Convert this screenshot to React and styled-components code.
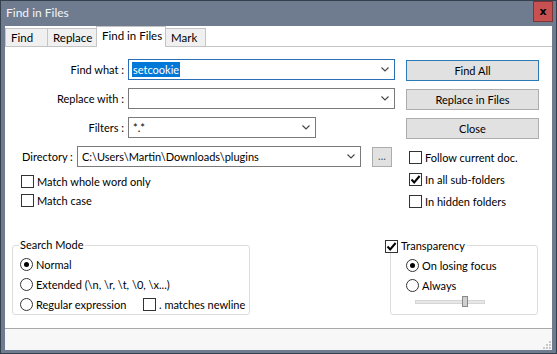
import React from 'react';
import styled, { createGlobalStyle } from 'styled-components';

const Global = createGlobalStyle`
  html, body { margin: 0; padding: 0; background: #6f7c8f; }
  body {
    font-family: Lato, "Liberation Sans", sans-serif;
    font-size: 11px;
    color: #000;
  }
  * { box-sizing: border-box; }
`;

const Window = styled.div`
  width: 557px;
  height: 354px;
  display: flex;
  flex-direction: column;
  background: #6f7c8f;
  border: 1px solid #34404e;
  overflow: hidden;
`;

const TitleBar = styled.div`
  height: 25px;
  flex: none;
  display: flex;
  align-items: flex-start;
  justify-content: space-between;
  padding: 0 3px 0 5px;
`;

const Title = styled.div`
  color: #f2f4f7;
  font-size: 12px;
  line-height: 24px;
`;

const CloseButton = styled.div`
  width: 20px;
  height: 21px;
  background: #c75050;
  border: 1px solid #7d3434;
  display: flex;
  align-items: center;
  justify-content: center;
  color: #000;
  font-weight: bold;
  font-size: 11px;
  font-family: "DejaVu Sans", sans-serif;
  line-height: 1;
`;

const Client = styled.div`
  flex: 1;
  margin: 0 4px 3px 4px;
  background: #fff;
  display: flex;
  flex-direction: column;
`;

const TabStrip = styled.div`
  height: 21px;
  flex: none;
  display: flex;
  align-items: flex-end;
  border-bottom: 1px solid #c4c4c4;
`;

const Tab = styled.div`
  width: ${p => p.$w}px;
  height: ${p => (p.$active ? 21 : 18)}px;
  margin-left: ${p => (p.$first ? 0 : -1)}px;
  margin-bottom: ${p => (p.$active ? -1 : 0)}px;
  padding: 0 0 ${p => (p.$active ? 3 : 0)}px 5px;
  background: ${p => (p.$active ? '#fff' : '#f0f0f0')};
  border: 1px solid #c4c4c4;
  border-bottom: ${p => (p.$active ? 'none' : '0')};
  position: relative;
  z-index: ${p => (p.$active ? 1 : 0)};
  display: flex;
  align-items: center;
  white-space: nowrap;
  font-size: 11.5px;
`;

const Page = styled.div`
  flex: 1;
  display: flex;
  flex-direction: column;
  background: #fff;
`;

const TopSection = styled.div`
  display: grid;
  grid-template-columns: 401px 133px;
  padding-top: 12px;
`;

const LeftCol = styled.div`
  display: flex;
  flex-direction: column;
`;

const FieldGrid = styled.div`
  display: grid;
  grid-template-columns: 119px auto;
  column-gap: 4px;
  row-gap: 8px;
  align-items: center;
  justify-items: start;
`;

const FieldLabel = styled.div`
  justify-self: end;
  white-space: nowrap;
`;

const Combo = styled.div`
  width: ${p => p.$w}px;
  height: 21px;
  border: 1px solid ${p => (p.$focused ? '#2a6fb5' : '#7a7a7a')};
  background: #fff;
  display: flex;
  align-items: center;
  justify-content: space-between;
  padding: 0 5px 0 4px;
  white-space: nowrap;
`;

const Selected = styled.span`
  background: #0078d7;
  color: #fff;
  padding: 1px 1px;
  margin-left: -1px;
`;

const DirectoryRow = styled.div`
  display: flex;
  align-items: center;
  margin-top: 8px;
  padding-left: 17px;
`;

const DirLabel = styled.div`
  width: 55px;
  white-space: nowrap;
`;

const BrowseButton = styled.div`
  width: 20px;
  height: 20px;
  margin-left: 11px;
  background: #e1e1e1;
  border: 1px solid #adadad;
  color: #555;
  display: flex;
  align-items: center;
  justify-content: center;
  font-size: 11px;
  padding-bottom: 2px;
`;

const CheckList = styled.div`
  display: flex;
  flex-direction: column;
  margin-top: ${p => p.$mt}px;
  padding-left: ${p => p.$pl}px;
`;

const CheckRow = styled.div`
  height: ${p => p.$h}px;
  display: flex;
  align-items: center;
  gap: 3px;
  white-space: nowrap;
`;

const Box = styled.div`
  width: 13px;
  height: 13px;
  flex: none;
  border: 1px solid #333;
  background: #fff;
  display: flex;
  align-items: center;
  justify-content: center;
`;

const RightCol = styled.div`
  display: flex;
  flex-direction: column;
  padding-top: 1px;
`;

const ButtonStack = styled.div`
  display: flex;
  flex-direction: column;
  gap: 8px;
`;

const Button = styled.div`
  height: 21px;
  background: #e1e1e1;
  border: 1px solid ${p => (p.$default ? '#2a7ab8' : '#adadad')};
  display: flex;
  align-items: center;
  justify-content: center;
  white-space: nowrap;
`;

const BottomSection = styled.div`
  display: flex;
  justify-content: space-between;
  margin-top: 33px;
  padding: 0 14px 0 7px;
`;

const Group = styled.div`
  position: relative;
  width: ${p => p.$w}px;
  height: 70px;
  border: 1px solid #dcdcdc;
  border-radius: 3px;
  padding: 9px 0 0 ${p => p.$pl}px;
  display: flex;
  flex-direction: column;
`;

const GroupTitle = styled.div`
  position: absolute;
  top: ${p => p.$top}px;
  left: ${p => p.$left}px;
  background: #fff;
  padding: 0 2px 0 1px;
  line-height: 14px;
  display: flex;
  align-items: center;
  gap: 3px;
  white-space: nowrap;
`;

const OptionRow = styled.div`
  height: 20px;
  display: flex;
  align-items: center;
  white-space: nowrap;
`;

const RadioItem = styled.div`
  display: flex;
  align-items: center;
  gap: 3px;
  width: ${p => (p.$w ? `${p.$w}px` : 'auto')};
`;

const Radio = styled.div`
  width: 13px;
  height: 13px;
  flex: none;
  border-radius: 50%;
  border: 1px solid #333;
  background: #fff;
  display: flex;
  align-items: center;
  justify-content: center;
  &::after {
    content: '';
    width: 5px;
    height: 5px;
    border-radius: 50%;
    background: ${p => (p.$on ? '#000' : 'transparent')};
  }
`;

const SliderRow = styled.div`
  height: 14px;
  display: flex;
  align-items: center;
  padding-left: 9px;
`;

const Track = styled.div`
  position: relative;
  width: 70px;
  height: 4px;
  background: #e7e7e7;
  border: 1px solid #d6d6d6;
`;

const Thumb = styled.div`
  position: absolute;
  left: 46px;
  top: -5px;
  width: 6px;
  height: 11px;
  background: #d0d0d0;
  border: 1px solid #8a8a8a;
`;

const StatusBar = styled.div`
  height: 22px;
  flex: none;
  border-top: 1px solid #a8a8a8;
  background: #f7f7f7;
  display: flex;
  justify-content: flex-end;
  align-items: flex-end;
  padding: 0 1px 1px 0;
`;

const Chevron = () => (
  <svg width="8" height="5" viewBox="0 0 8 5">
    <path d="M0.5 0.5 L4 4 L7.5 0.5" fill="none" stroke="#444" strokeWidth="1.1" />
  </svg>
);

const Check = () => (
  <svg width="11" height="11" viewBox="0 0 11 11">
    <path d="M1.5 5.5 L4.2 8.4 L9.6 2" fill="none" stroke="#000" strokeWidth="2" />
  </svg>
);

const Grip = () => (
  <svg width="8" height="8" viewBox="0 0 8 8">
    {[[6, 0], [3, 3], [6, 3], [0, 6], [3, 6], [6, 6]].map(([x, y], i) => (
      <rect key={i} x={x} y={y} width="2" height="2" fill="#c8c8c8" />
    ))}
  </svg>
);

const CheckBox = ({ checked }) => <Box>{checked && <Check />}</Box>;

export default function App() {
  return (
    <>
      <Global />
      <Window>
        <TitleBar>
          <Title>Find in Files</Title>
          <CloseButton>x</CloseButton>
        </TitleBar>
        <Client>
          <TabStrip>
            <Tab $w={43} $first>Find</Tab>
            <Tab $w={50}>Replace</Tab>
            <Tab $w={70} $active>Find in Files</Tab>
            <Tab $w={41}>Mark</Tab>
          </TabStrip>
          <Page>
            <TopSection>
              <LeftCol>
                <FieldGrid>
                  <FieldLabel>Find what :</FieldLabel>
                  <Combo $w={267} $focused>
                    <Selected>setcookie</Selected>
                    <Chevron />
                  </Combo>
                  <FieldLabel>Replace with :</FieldLabel>
                  <Combo $w={267}>
                    <span />
                    <Chevron />
                  </Combo>
                  <FieldLabel>Filters :</FieldLabel>
                  <Combo $w={188}>
                    <span>*.*</span>
                    <Chevron />
                  </Combo>
                </FieldGrid>
                <DirectoryRow>
                  <DirLabel>Directory :</DirLabel>
                  <Combo $w={284}>
                    <span>C:\Users\Martin\Downloads\plugins</span>
                    <Chevron />
                  </Combo>
                  <BrowseButton>...</BrowseButton>
                </DirectoryRow>
                <CheckList $mt={5} $pl={16}>
                  <CheckRow $h={19}>
                    <CheckBox />
                    <span>Match whole word only</span>
                  </CheckRow>
                  <CheckRow $h={19}>
                    <CheckBox />
                    <span>Match case</span>
                  </CheckRow>
                </CheckList>
              </LeftCol>
              <RightCol>
                <ButtonStack>
                  <Button $default>Find All</Button>
                  <Button>Replace in Files</Button>
                  <Button>Close</Button>
                </ButtonStack>
                <CheckList $mt={7} $pl={3}>
                  <CheckRow $h={22}>
                    <CheckBox />
                    <span>Follow current doc.</span>
                  </CheckRow>
                  <CheckRow $h={22}>
                    <CheckBox checked />
                    <span>In all sub-folders</span>
                  </CheckRow>
                  <CheckRow $h={22}>
                    <CheckBox />
                    <span>In hidden folders</span>
                  </CheckRow>
                </CheckList>
              </RightCol>
            </TopSection>
            <BottomSection>
              <Group $w={238} $pl={7}>
                <GroupTitle $top={-8} $left={6}>Search Mode</GroupTitle>
                <OptionRow>
                  <RadioItem>
                    <Radio $on />
                    <span>Normal</span>
                  </RadioItem>
                </OptionRow>
                <OptionRow>
                  <RadioItem>
                    <Radio />
                    <span>Extended (\n, \r, \t, \0, \x...)</span>
                  </RadioItem>
                </OptionRow>
                <OptionRow>
                  <RadioItem $w={123}>
                    <Radio />
                    <span>Regular expression</span>
                  </RadioItem>
                  <CheckRow $h={20}>
                    <CheckBox />
                    <span>. matches newline</span>
                  </CheckRow>
                </OptionRow>
              </Group>
              <Group $w={148} $pl={15}>
                <GroupTitle $top={-7} $left={-7}>
                  <CheckBox checked />
                  <span>Transparency</span>
                </GroupTitle>
                <OptionRow>
                  <RadioItem>
                    <Radio $on />
                    <span>On losing focus</span>
                  </RadioItem>
                </OptionRow>
                <OptionRow>
                  <RadioItem>
                    <Radio />
                    <span>Always</span>
                  </RadioItem>
                </OptionRow>
                <SliderRow>
                  <Track>
                    <Thumb />
                  </Track>
                </SliderRow>
              </Group>
            </BottomSection>
          </Page>
          <StatusBar>
            <Grip />
          </StatusBar>
        </Client>
      </Window>
    </>
  );
}
